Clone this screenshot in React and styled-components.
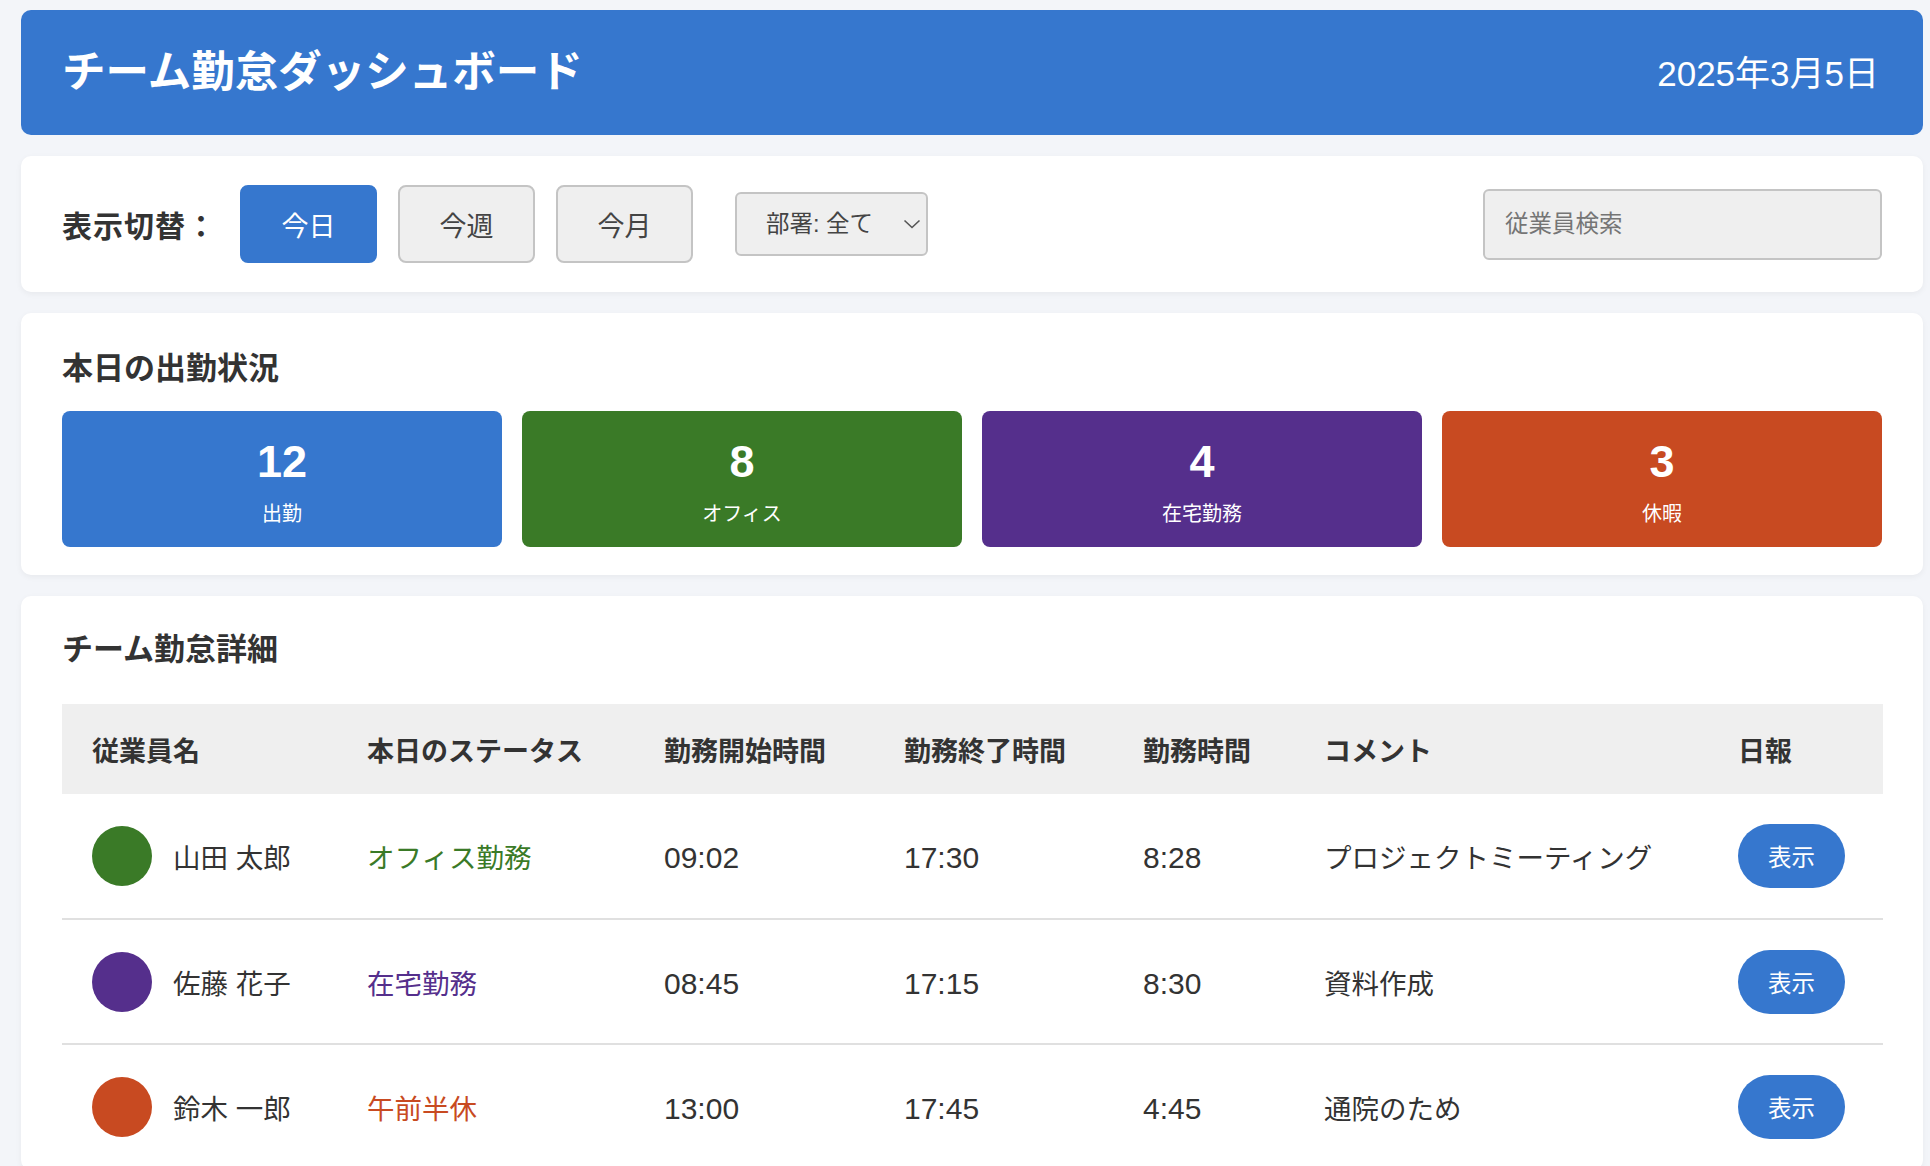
import React from 'react'
import styled, { createGlobalStyle } from 'styled-components'

const GlobalStyle = createGlobalStyle`
    html, body {
        margin: 0;
        padding: 0;
        background: #f3f5f9;
    }
    body {
        font-family: "Liberation Sans", "Noto Sans CJK JP", sans-serif;
        color: #333;
    }
    * {
        box-sizing: border-box;
    }
`

const colors = {
    blue: '#3677ce',
    green: '#3a7a27',
    purple: '#552f8c',
    red: '#c84a21',
}

const Page = styled.div`
    display: flex;
    flex-direction: column;
    gap: 21px;
    padding: 10px 7px 40px 21px;
`

const Header = styled.header`
    display: flex;
    align-items: center;
    justify-content: space-between;
    height: 125px;
    padding: 0 44px 0 41px;
    background: ${colors.blue};
    border-radius: 10px;
    color: #fff;
`

const Title = styled.h1`
    margin: 0;
    font-size: 43.5px;
    font-weight: 700;
    line-height: 1.2;
`

const DateText = styled.div`
    font-size: 35px;
    line-height: 1.2;
    padding-top: 2px;
`

const Card = styled.section`
    background: #fff;
    border-radius: 10px;
    box-shadow: 0 2px 6px rgba(0, 0, 0, 0.05);
`

const Controls = styled(Card)`
    display: flex;
    align-items: center;
    padding: 29px 41px;
`

const ControlLabel = styled.span`
    font-size: 30px;
    font-weight: 700;
    color: #333;
    margin-right: 23px;
    letter-spacing: 1px;
`

const ViewButtons = styled.div`
    display: flex;
    gap: 21px;
`

const ViewButton = styled.button`
    width: 137px;
    height: 78px;
    border-radius: 8px;
    font-family: inherit;
    font-size: 27px;
    cursor: pointer;
    border: 2px solid ${({ active }) => active ? colors.blue : '#c4c4c4'};
    background: ${({ active }) => active ? colors.blue : '#efefef'};
    color: ${({ active }) => active ? '#fff' : '#444'};
`

const SelectBox = styled.div`
    position: relative;
    margin-left: 42px;
    width: 193px;
    height: 64px;
`

const Select = styled.select`
    appearance: none;
    width: 100%;
    height: 100%;
    padding: 0 0 0 29px;
    border: 2px solid #c4c4c4;
    border-radius: 6px;
    background: #efefef;
    font-family: inherit;
    font-size: 23.5px;
    color: #444;
`

const Chevron = styled.svg`
    position: absolute;
    right: 7px;
    top: 27px;
    pointer-events: none;
`

const Search = styled.input`
    margin-left: auto;
    width: 399px;
    height: 71px;
    padding: 0 20px;
    border: 2px solid #c4c4c4;
    border-radius: 6px;
    background: #efefef;
    font-family: inherit;
    font-size: 23.5px;
    color: #333;

    ::placeholder {
        color: #777;
    }
`

const StatsCard = styled(Card)`
    padding: 38px 41px 28px;
`

const SectionTitle = styled.h2`
    margin: 0 0 ${({ gap }) => gap}px;
    font-size: 31px;
    font-weight: 700;
    line-height: 36px;
    color: #333;
`

const StatGrid = styled.div`
    display: grid;
    grid-template-columns: repeat(4, 1fr);
    gap: 20px;
`

const StatBox = styled.div`
    display: flex;
    flex-direction: column;
    align-items: center;
    gap: 12px;
    padding: 25px 0 19px;
    border-radius: 8px;
    background: ${({ color }) => color};
    color: #fff;
`

const StatNumber = styled.div`
    font-size: 45px;
    font-weight: 700;
    line-height: 52px;
`

const StatLabel = styled.div`
    font-size: 20px;
    line-height: 28px;
`

const TableCard = styled(Card)`
    padding: 36px 41px 0;
`

const Table = styled.table`
    width: 100%;
    border-collapse: collapse;
    table-layout: fixed;
`

const Th = styled.th`
    height: 90px;
    padding: 0 30px;
    background: #efefef;
    text-align: left;
    font-size: 27px;
    font-weight: 700;
    color: #333;
`

const Td = styled.td`
    height: 125px;
    padding: 0 30px;
    border-bottom: 2px solid #e0e0e0;
    font-size: ${({ time }) => time ? '30px' : '27.5px'};
    padding-top: ${({ time }) => time ? '4px' : '0'};
    color: #333;
    vertical-align: middle;
    white-space: nowrap;
`

const NameCell = styled.div`
    display: flex;
    align-items: center;
    gap: 21px;
`

const Avatar = styled.div`
    width: 60px;
    height: 60px;
    border-radius: 50%;
    background: ${({ color }) => color};
    flex-shrink: 0;
`

const Status = styled.span`
    color: ${({ color }) => color};
`

const ReportButton = styled.button`
    width: 107px;
    height: 64px;
    border: none;
    border-radius: 32px;
    background: ${colors.blue};
    color: #fff;
    font-family: inherit;
    font-size: 23.5px;
    cursor: pointer;
`

const stats = [
    { value: 12, label: '出勤', color: colors.blue },
    { value: 8, label: 'オフィス', color: colors.green },
    { value: 4, label: '在宅勤務', color: colors.purple },
    { value: 3, label: '休暇', color: colors.red },
]

const columns = [
    { title: '従業員名', width: 275 },
    { title: '本日のステータス', width: 297 },
    { title: '勤務開始時間', width: 240 },
    { title: '勤務終了時間', width: 239 },
    { title: '勤務時間', width: 181 },
    { title: 'コメント', width: 414 },
    { title: '日報', width: 175 },
]

const members = [
    { name: '山田 太郎', status: 'オフィス勤務', color: colors.green, start: '09:02', end: '17:30', hours: '8:28', comment: 'プロジェクトミーティング' },
    { name: '佐藤 花子', status: '在宅勤務', color: colors.purple, start: '08:45', end: '17:15', hours: '8:30', comment: '資料作成' },
    { name: '鈴木 一郎', status: '午前半休', color: colors.red, start: '13:00', end: '17:45', hours: '4:45', comment: '通院のため' },
]

const App = () => {
    return (
        <>
        <GlobalStyle />
        <Page>
            <Header>
                <Title>チーム勤怠ダッシュボード</Title>
                <DateText>2025年3月5日</DateText>
            </Header>

            <Controls>
                <ControlLabel>表示切替：</ControlLabel>
                <ViewButtons>
                    <ViewButton active>今日</ViewButton>
                    <ViewButton>今週</ViewButton>
                    <ViewButton>今月</ViewButton>
                </ViewButtons>
                <SelectBox>
                    <Select defaultValue="all">
                        <option value="all">部署: 全て</option>
                        <option value="dev">部署: 開発</option>
                        <option value="sales">部署: 営業</option>
                    </Select>
                    <Chevron width="18" height="10" viewBox="0 0 18 10">
                        <path d="M1.5 1.5 L9 8.5 L16.5 1.5" fill="none" stroke="#555" strokeWidth="1.6" />
                    </Chevron>
                </SelectBox>
                <Search type="text" placeholder="従業員検索" />
            </Controls>

            <StatsCard>
                <SectionTitle gap={24}>本日の出勤状況</SectionTitle>
                <StatGrid>
                    {stats.map(s => (
                        <StatBox key={s.label} color={s.color}>
                            <StatNumber>{s.value}</StatNumber>
                            <StatLabel>{s.label}</StatLabel>
                        </StatBox>
                    ))}
                </StatGrid>
            </StatsCard>

            <TableCard>
                <SectionTitle gap={36}>チーム勤怠詳細</SectionTitle>
                <Table>
                    <colgroup>
                        {columns.map(c => <col key={c.title} style={{ width: c.width }} />)}
                    </colgroup>
                    <thead>
                        <tr>
                            {columns.map(c => <Th key={c.title}>{c.title}</Th>)}
                        </tr>
                    </thead>
                    <tbody>
                        {members.map(m => (
                            <tr key={m.name}>
                                <Td>
                                    <NameCell>
                                        <Avatar color={m.color} />
                                        <span>{m.name}</span>
                                    </NameCell>
                                </Td>
                                <Td><Status color={m.color}>{m.status}</Status></Td>
                                <Td time>{m.start}</Td>
                                <Td time>{m.end}</Td>
                                <Td time>{m.hours}</Td>
                                <Td>{m.comment}</Td>
                                <Td><ReportButton>表示</ReportButton></Td>
                            </tr>
                        ))}
                    </tbody>
                </Table>
            </TableCard>
        </Page>
        </>
    )
}

export default App
